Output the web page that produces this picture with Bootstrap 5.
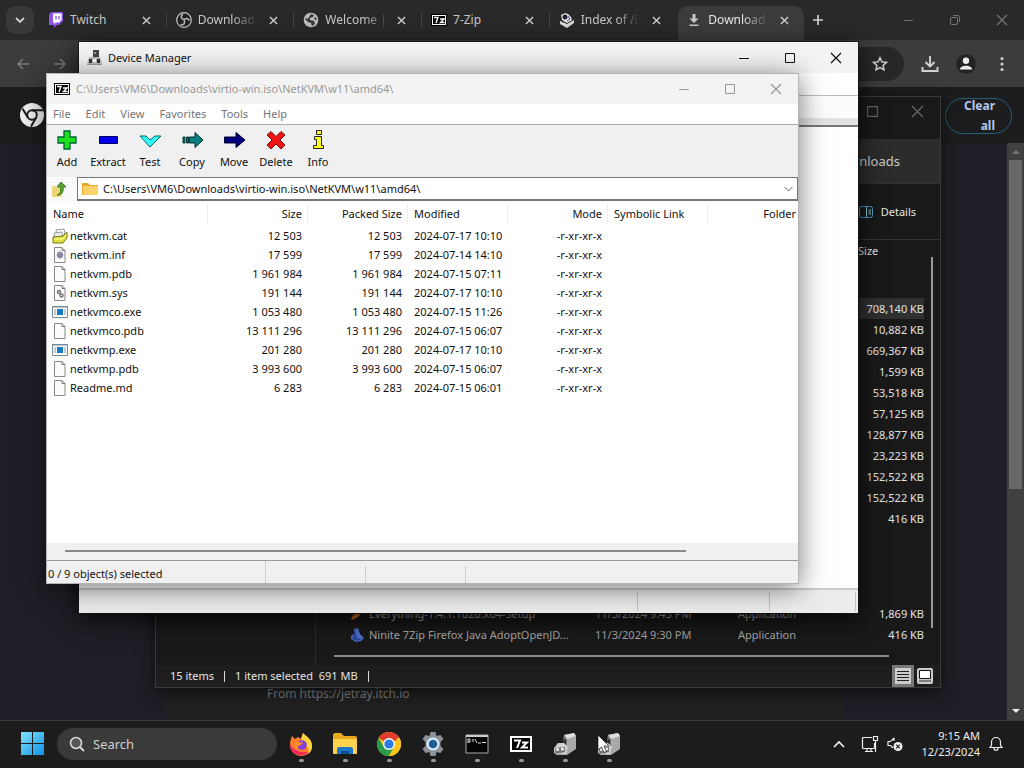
<!DOCTYPE html>
<html lang="en">
<head>
<meta charset="utf-8">
<meta name="viewport" content="width=device-width, initial-scale=1">
<title>Desktop</title>
<link rel="stylesheet" href="https://cdn.jsdelivr.net/npm/bootstrap@5.3.0/dist/css/bootstrap.min.css">
<style>
body{font-family:"Noto Sans","Open Sans",sans-serif;font-size:11px;line-height:20px;background:#1c1c1c;color:#ddd;overflow:hidden}
button{background:none;border:0;padding:0;color:inherit;font-size:inherit;line-height:inherit}
svg{display:block;flex:none}
.stroke{fill:none;stroke:currentColor}
.desk{min-height:0;overflow:hidden}
/* browser */
.strip{height:40px;background:#292929;color:#d0d0d0;padding:0 8px 0 6px}
.tabdrop{width:28px;height:28px;border-radius:9px;background:#383838}
.tabs{width:766px;height:40px;margin-left:4px;padding-top:6px}
.ctab{flex:1 1 0;min-width:0;height:34px;padding:0 15px 6px 10px;position:relative}
.ctab+.ctab:not(.on)::before{content:"";position:absolute;left:0;top:6px;height:16px;border-left:1px solid #444}
.ctab a{color:#c8c8c8;text-decoration:none;white-space:nowrap;font-size:12px;height:20px;margin-left:6px}
.ctab .fade-end{-webkit-mask-image:linear-gradient(90deg,#000 60%,transparent 105%);mask-image:linear-gradient(90deg,#000 60%,transparent 105%)}
.ctab.on{background:#3c3c3c;border-radius:10px 10px 0 0;margin-left:2px;padding-left:8px}
.ctab.on a{color:#e6e6e6}
.cap{gap:35px;color:#777}
.navrow{height:47px;background:#3c3c3c;color:#d2d2d2}
.omni{height:34px;border-radius:17px;background:#282828}
.navrow .more{margin-left:18px}
.web{background:linear-gradient(180deg,#1d1d1f 0 57px,#201f27 57px)}
.pagehead{height:56px}
.clearall{width:67px;height:36px;border:1px solid #245f78;border-radius:18px;color:#b4c8ee;font-weight:700;font-size:12px;text-align:right;padding:0 16px 0 12px;margin:11px 12px 0 0;white-space:normal}
.vbar{width:17px;background:#404040}
.vthumb{background:#686868;flex:0 0 57%}
.card-dl{background:#212121;color:#858585;font-size:12px;margin:0 164px 0 165px}
/* windows */
.win{position:absolute;display:flex;flex-direction:column;overflow:hidden}
.win-exp{left:155px;right:83px;top:96px;bottom:32px;background:#191919;border:1px solid #3a3a3a;box-shadow:0 4px 16px #000a;color:#e4e4e4}
.win-dev{left:79px;right:166px;top:42px;bottom:107px;background:#fff;box-shadow:0 6px 24px #000c,0 0 0 1px #222;color:#111}
.win-7z{left:46px;right:225px;top:73px;bottom:136px;background:#fff;border:1px solid #b4b4b4;box-shadow:0 4px 26px #0008;color:#111}
.exphead{height:42px;color:#666}
.exphead .caps{height:28px;gap:32px}
.exptabs{height:45px;background:#2c2c2c;font-size:13px;color:#c8c8c8;border-bottom:1px solid #333;padding-right:40px}
.expcmd{height:56px;border-bottom:1px solid #363636}
.tree{flex:0 0 160px;border-right:1px solid #2c2c2c}
.files{width:100%;table-layout:fixed;margin-left:34px}
.files td,.files th{padding:0;height:21px;font-weight:400;white-space:nowrap;line-height:21px}
.files td{color:#a8a8a8}
.files td:last-child{text-align:right;color:#e4e4e4}
.files tr.sel td{background:#303030;color:#e4e4e4}
.files .spacer td{height:37px}
.files .gap td{height:74px}
.vline{flex:0 0 2px;background:#999;margin:17px 7px 17px 7px}
.hline{height:2px;background:#8a8a8a;margin:0 51px 0 18px}
.expstat{height:22px;background:#1e1e1e;padding:0 4px 0 14px;gap:10px}
.stbar{border-left:1px solid #ddd;height:11px}
.viewbtn{width:22px;height:22px;color:#222}
.viewbtn.on{background:#777}
/* device manager */
.devhead{height:31px;background:#f3f3f3;gap:6px}
.caps34{gap:34px}
.devtool{height:32px;background:#fcfcfc;border-top:1px solid #bbb;border-bottom:2px solid #777;box-shadow:inset 0 -7px #e3e3e3}
.devblank{height:22px}
.devstat{height:25px;background:#ececec;border-top:2px solid #ccc;padding:2px 2px 2px 0}
.devstat span{border-right:1px solid #c4c4c4}
.devstat .w1{width:132px}
.devstat .w2{width:86px}
/* archive manager */
.zhead{height:30px;background:#f3f3f3;color:#999;gap:6px;padding-left:7px}
.zmenu{height:21px;border-bottom:1px solid #aaa;color:#757575;gap:15px;padding-left:6px}
.ztools{height:52px;background:#f0f0f0}
.ztools button{width:42px;gap:1px}
.ztools button:first-child{width:40px}
.addr{height:24px;border:1px solid #777;border-width:1px 1px 2px 1px}
.addr select{appearance:none;border:0;background:transparent;flex:1;min-width:0;color:#111;font:inherit;padding:0;line-height:20px;outline:0}
.upbtn{width:30px;background:#fafafa}
.zlist{width:100%;table-layout:fixed}
.zlist th,.zlist td{padding:0 6px;height:19px;line-height:19px;font-weight:400;white-space:nowrap}
.zlist th{height:25px;line-height:25px;background:linear-gradient(#eee,#eee) right 2px/1px 21px no-repeat}
.zlist th:last-child{background:none;padding-right:2px}
.zlist tbody td:first-child{padding-left:5px}
.zname{gap:2px}
.zscroll{height:17px;background:#f0f0f0;padding:7px 112px 0 18px}
.zscroll div{height:2px;background:#888}
.zstat{height:23px;background:#f0f0f0;border-top:1px solid #999}
.zstat span{width:100px;height:18px;border-right:1px solid #ccc;margin-top:5px}
.zstat .first{width:219px;margin:0;height:22px;padding:3px 0 0 1px}
/* taskbar */
.taskbar{height:48px;background:#1c1c1c;border-top:1px solid #3b3b3b;color:#eee;padding:0 20px 2px}
.find{width:220px;height:32px;border-radius:16px;background:#3a3a3a;margin:0 2px 0 12px}
.find input{border:0;background:transparent;color:#ddd;outline:0;font-size:13px;width:150px;padding:0}
.find input::placeholder{color:#d0d0d0;opacity:1}
.app{width:44px;height:45px;position:relative}
.app::after{content:"";position:absolute;bottom:4px;left:20px;width:5px;height:3px;border-radius:2px;background:#999}
.app svg:not(.pointer){width:26px;height:26px}
.pointer{position:absolute;left:10px;top:13px}
.clock{line-height:16px;font-size:11px;text-align:right;margin-left:18px}
</style>
</head>
<body class="vh-100 d-flex flex-column">
<svg width="0" height="0" class="position-absolute" aria-hidden="true">
 <symbol id="x" viewBox="0 0 10 10"><path d="M1 1l8 8M9 1L1 9" class="stroke" stroke-width="1.5"/></symbol>
 <symbol id="wx" viewBox="0 0 12 12"><path d="M1 1l10 10M11 1L1 11" class="stroke" stroke-width="1.2"/></symbol>
 <symbol id="wmax" viewBox="0 0 12 12"><path d="M1.5 1.5h9v9h-9z" class="stroke"/></symbol>
 <symbol id="wmin" viewBox="0 0 12 12"><path d="M1 6.5h10" class="stroke"/></symbol>
 <symbol id="z7" viewBox="0 0 16 12"><path d="M0 0h16v12H0z" fill="#000"/><path d="M1 1h14v10H1z" fill="#fff"/><path d="M2 2h12v8H2z" fill="#000"/><path d="M3 3.500h4L5 9M9 5h4L9.500 8.500H13.500" fill="none" stroke="#fff" stroke-width="1.400"/></symbol>
 <symbol id="doc" viewBox="0 0 16 16"><path d="M2.500.5h7.500l3 3v12H2.500z" fill="#fcfcfc" stroke="#888"/><path d="M10 .5v3h3" fill="none" stroke="#777"/></symbol>
 <symbol id="exe" viewBox="0 0 16 16"><path d="M.5 2.500h15v11H.5z" fill="#fff" stroke="#7a8a99"/><path d="M.5 3h15" stroke="#789"/><path d="M5 5h6v6H5z" fill="#1679c4"/><path d="M2 6h2M2 8h2M2 10h2M12 6h2M12 8h2M12 10h2" stroke="#89a"/></symbol>
 <symbol id="printer" viewBox="0 0 26 26"><path d="M12 4l10-2 2 3v13l-9 6H9l2-6z" fill="#a9a9a9"/><path d="M12 4l10-2 2 3-9 3z" fill="#dedede"/><path d="M12 4l3 4v9l-4-3z" fill="#777"/><path d="M12 8l2 1v5l-3-2z" fill="#2c2c2c"/><path d="M2 17l4-5h6l4 4-2 7-9 1-3-2z" fill="#d0d0d0"/><path d="M3 17l10-1v5l-9 2-1-1z" fill="#777"/><circle cx="5.500" cy="18.500" r="1.600" fill="#eee"/><circle cx="10.500" cy="18" r="1.600" fill="#eee"/></symbol>
</svg>

<main class="desk position-relative flex-grow-1 d-flex flex-column">
 <!-- Browser -->
 <div class="strip d-flex align-items-center">
  <button class="tabdrop d-flex align-items-center justify-content-center" aria-label="Search tabs"><svg width="10" height="10" viewBox="0 0 10 10"><path d="M1 3l4 4 4-4" class="stroke" stroke-width="1.8"/></svg></button>
  <nav class="tabs d-flex" aria-label="Tabs">
   <div class="ctab d-flex align-items-center"><svg width="16" height="16" viewBox="0 0 16 16"><path d="M3 0h12v9l-4 4H8.500L6 16v-3H1V3z" fill="#8c54e8"/><path d="M5 1.500h8.500V8l-2.500 2.500H8L6.500 12v-1.500H5z" fill="#fff"/><path d="M8 4v3.500M11 4v3.500" stroke="#8c54e8" stroke-width="1.300"/></svg><a href="#">Twitch</a><button class="ms-auto" aria-label="Close"><svg width="9" height="9"><use href="#x"/></svg></button></div>
   <div class="ctab d-flex align-items-center"><svg width="16" height="16" viewBox="0 0 16 16"><circle cx="8" cy="8" r="7.300" fill="#222" stroke="#c8c8c8" stroke-width="1.200"/><path d="M7 2C4 4 5 7 8 7.500M13.500 8.500c-2-3-5-2.500-5.500 0M4.500 12.500C8 13.500 9.500 11 8 8" fill="none" stroke="#b8b8b8" stroke-width="1.600"/></svg><a href="#" class="fade-end">Download</a><button class="ms-auto" aria-label="Close"><svg width="9" height="9"><use href="#x"/></svg></button></div>
   <div class="ctab d-flex align-items-center"><svg width="16" height="16" viewBox="0 0 16 16"><circle cx="8" cy="8" r="7.300" fill="#bdbdbd"/><path d="M8 2l3 1-1 2-3 1v2l4 1 1 3-3 2-1-3-3-1-3-3 1-1 2 1 1-2zM12 5l2 2-1 1-2-1z" fill="#393939"/></svg><a href="#" class="fade-end">Welcome |</a><button class="ms-auto" aria-label="Close"><svg width="9" height="9"><use href="#x"/></svg></button></div>
   <div class="ctab d-flex align-items-center"><svg width="16" height="12"><use href="#z7"/></svg><a href="#">7-Zip</a><button class="ms-auto" aria-label="Close"><svg width="9" height="9"><use href="#x"/></svg></button></div>
   <div class="ctab d-flex align-items-center"><svg width="16" height="16" viewBox="0 0 16 16"><path d="M1 9l7 3 7-4v3l-7 5-7-4z" fill="#d9d9d9"/><path d="M2 3l4-2 3 1 3 3 1 3-5 3-5-3z" fill="#e8e8ee"/><circle cx="6" cy="5" r="2.500" fill="#223"/><path d="M9 4l2 3-3 2" fill="none" stroke="#447" /></svg><a href="#" class="fade-end">Index of /i</a><button class="ms-auto" aria-label="Close"><svg width="9" height="9"><use href="#x"/></svg></button></div>
   <div class="ctab on d-flex align-items-center"><svg width="16" height="16" viewBox="0 0 16 16"><path d="M6.500 2h3v4.500h3L8 11 3.500 6.500h3zM3.500 12.500h9V14h-9z" fill="#c8c8c8"/></svg><a href="#" class="fade-end">Download</a><button class="ms-auto" aria-label="Close"><svg width="9" height="9"><use href="#x"/></svg></button></div>
  </nav>
  <button class="ms-2" aria-label="New tab"><svg width="12" height="12" viewBox="0 0 12 12"><path d="M6 1v10M1 6h10" class="stroke" stroke-width="1.7"/></svg></button>
  <div class="cap d-flex ms-auto me-2"><button aria-label="Minimize"><svg width="11" height="12"><use href="#wmin"/></svg></button><button aria-label="Restore"><svg width="12" height="12" viewBox="0 0 12 12"><rect x="1.500" y="3.500" width="7" height="7" rx="1.500" class="stroke"/><path d="M4 1.500h4.500q2 0 2 2V8" class="stroke"/></svg></button><button aria-label="Close"><svg width="12" height="12"><use href="#wx"/></svg></button></div>
 </div>
 <div class="navrow d-flex align-items-center px-3">
  <button aria-label="Back"><svg width="14" height="14" viewBox="0 0 14 14" color="#7d7d7d"><path d="M13 7H2M7 2L2 7l5 5" class="stroke" stroke-width="1.500"/></svg></button>
  <button aria-label="Forward" class="ms-4"><svg width="14" height="14" viewBox="0 0 14 14" color="#7d7d7d"><path d="M0 7h11M6 2l5 5-5 5" class="stroke" stroke-width="1.500"/></svg></button>
  <div class="omni d-flex align-items-center justify-content-end flex-grow-1 ms-5 pe-3"><button aria-label="Bookmark"><svg width="16" height="16" viewBox="0 0 16 16"><path d="M8 1.800l1.900 4.100 4.500.5-3.300 3 .9 4.400L8 11.600l-4 2.200.9-4.400-3.300-3 4.500-.5z" class="stroke" stroke-width="1.500"/></svg></button></div>
  <div class="d-flex align-items-center ms-3">
  <button aria-label="Downloads"><svg width="20" height="20" viewBox="0 0 20 20"><path d="M10 2v10M5.500 8l4.500 4.500L14.500 8M2.500 13v4h15v-4" class="stroke" stroke-width="1.900"/></svg></button>
  <button aria-label="Profile" class="ms-3"><svg width="20" height="20" viewBox="0 0 20 20"><circle cx="10" cy="10" r="9.800" fill="#232323"/><circle cx="10" cy="6.800" r="3.200" fill="#eee"/><path d="M4 15.500c0-5 12-5 12 0z" fill="#eee"/></svg></button>
  <button aria-label="Menu" class="more"><svg width="14" height="16" viewBox="0 0 14 16"><g fill="#ccc"><circle cx="8" cy="2.500" r="1.600"/><circle cx="8" cy="8" r="1.600"/><circle cx="8" cy="13.500" r="1.600"/></g></svg></button></div>
 </div>
 <div class="web flex-grow-1 d-flex flex-column">
  <div class="pagehead d-flex justify-content-between ps-3">
   <svg width="24" height="24" viewBox="0 0 24 24" class="mt-3 ms-1"><circle cx="12" cy="12" r="12" fill="#f2f2f2"/><circle cx="12" cy="12" r="4.800" fill="none" stroke="#1d1d1f" stroke-width="2"/><path d="M12 7.200h11M7.800 14.400L2.500 5.500M16.200 14.400L11 23.500" stroke="#1d1d1f" stroke-width="2"/></svg>
   <button class="clearall d-flex align-items-center justify-content-end">Clear all</button>
  </div>
  <div class="d-flex flex-grow-1">
   <div class="flex-grow-1 d-flex flex-column justify-content-end"><div class="card-dl pt-5 pb-3"><div style="padding-left:102px">From <a href="#" class="text-reset text-decoration-none">https://jetray.itch.io</a></div></div></div>
   <div class="vbar d-flex flex-column align-items-stretch"><svg class="mx-auto" width="8" height="17" viewBox="0 0 8 17"><path d="M0 11l4-4 4 4z" fill="#777"/></svg><div class="vthumb mx-auto w-75"></div><svg class="mt-auto mx-auto" width="8" height="17" viewBox="0 0 8 17"><path d="M0 6l4 4 4-4z" fill="#eee"/></svg></div>
  </div>
 </div>

 <!-- File explorer -->
 <section class="win win-exp" aria-label="Downloads folder">
  <div class="exphead d-flex justify-content-end pe-3"><div class="caps d-flex align-items-center"><button aria-label="Maximize"><svg width="13" height="13"><use href="#wmax"/></svg></button><button aria-label="Close"><svg width="13" height="13"><use href="#wx"/></svg></button></div></div>
  <div class="exptabs d-flex align-items-center justify-content-end">Downloads</div>
  <div class="expcmd d-flex align-items-center justify-content-end pe-4"><button class="d-flex align-items-center gap-2"><svg width="14" height="12" viewBox="0 0 14 12"><rect x=".5" y=".5" width="13" height="11" rx="2" fill="none" stroke="#4b9cc4"/><path d="M7.500 1v10M9.500 4h2.500M9.500 6h2.500M9.500 8h2.500" stroke="#8cc" fill="none"/></svg>Details</button></div>
  <div class="d-flex flex-grow-1">
   <div class="tree"></div>
   <div class="flex-grow-1 d-flex flex-column">
    <div class="d-flex">
     <table class="files">
      <colgroup><col style="width:19px"><col style="width:226px"><col style="width:143px"><col style="width:120px"><col></colgroup>
      <thead><tr><th></th><th></th><th></th><th></th><th>Size</th></tr></thead>
      <tbody>
       <tr class="spacer"><td colspan="5"></td></tr>
       <tr class="sel"><td colspan="5">708,140 KB</td></tr><tr><td colspan="5">10,882 KB</td></tr><tr><td colspan="5">669,367 KB</td></tr><tr><td colspan="5">1,599 KB</td></tr><tr><td colspan="5">53,518 KB</td></tr><tr><td colspan="5">57,125 KB</td></tr><tr><td colspan="5">128,877 KB</td></tr><tr><td colspan="5">23,223 KB</td></tr><tr><td colspan="5">152,522 KB</td></tr><tr><td colspan="5">152,522 KB</td></tr><tr><td colspan="5">416 KB</td></tr>
       <tr class="gap"><td colspan="5"></td></tr>
       <tr><td><svg width="14" height="14" viewBox="0 0 14 14"><path d="M1 12l3-5 5-5 4 3-5 5-6 3z" fill="#d4701d"/></svg></td><td>Everything-1.4.1.1026.x64-Setup</td><td>11/3/2024 9:45 PM</td><td>Application</td><td>1,869 KB</td></tr>
       <tr><td><svg width="14" height="14" viewBox="0 0 14 14"><path d="M4 1l4-1 2 6 4 4-3 3-5 1-5-3V8l3-2z" fill="#4e6fcc"/><path d="M5 2l2 8 5 1-5 2-5-2z" fill="#2c479c"/></svg></td><td>Ninite 7Zip Firefox Java AdoptOpenJD...</td><td>11/3/2024 9:30 PM</td><td>Application</td><td>416 KB</td></tr>
      </tbody>
     </table>
     <div class="vline"></div>
    </div>
    <div class="mt-auto pb-2"><div class="hline"></div></div>
   </div>
  </div>
  <div class="expstat d-flex align-items-center"><span>15 items</span><span class="stbar"></span><span>1 item selected&nbsp; 691 MB</span><span class="stbar"></span>
   <div class="ms-auto d-flex"><button class="viewbtn on d-flex align-items-center justify-content-center" aria-label="Details view"><svg width="16" height="16" viewBox="0 0 16 16"><rect width="16" height="16" fill="#ccc"/><path d="M2 3.500h12M2 6.500h12M2 9.500h12M2 12.500h12" stroke="#222"/></svg></button><button class="viewbtn d-flex align-items-center justify-content-center" aria-label="Large icons"><svg width="16" height="16" viewBox="0 0 16 16"><rect width="16" height="16" rx="2" fill="#ccc"/><path d="M2.500 2.500h11v8h-11z" fill="#fff" stroke="#111"/><path d="M2 13h12" stroke="#333"/></svg></button></div>
  </div>
 </section>

 <!-- Device manager -->
 <section class="win win-dev" aria-label="Device Manager">
  <div class="devhead d-flex align-items-center px-2"><svg width="15" height="16" viewBox="0 0 15 16"><path d="M6 0h6v7H6z" fill="#444"/><path d="M7 2h2v2H7z" fill="#999"/><path d="M2 7h11l2 7H0z" fill="#bbb"/><path d="M2 9h3v4H2zM10 9h3v4h-3z" fill="#333"/><path d="M6 9h3v3H6z" fill="#fff"/><path d="M0 14h15v1H0z" fill="#999"/></svg><span>Device Manager</span>
   <div class="caps34 ms-auto d-flex me-2"><button aria-label="Minimize"><svg width="12" height="12"><use href="#wmin"/></svg></button><button aria-label="Maximize"><svg width="12" height="12"><use href="#wmax"/></svg></button><button aria-label="Close"><svg width="12" height="12"><use href="#wx"/></svg></button></div></div>
  <div class="devblank"></div>
  <div class="devtool"></div>
  <div class="flex-grow-1"></div>
  <div class="devstat d-flex"><span class="flex-grow-1"></span><span class="w1"></span><span class="w2"></span></div>
 </section>

 <!-- Archive manager -->
 <section class="win win-7z" aria-label="7-Zip">
  <div class="zhead d-flex align-items-center"><svg width="16" height="12"><use href="#z7"/></svg><span>C:\Users\VM6\Downloads\virtio-win.iso\NetKVM\w11\amd64\</span>
   <div class="caps34 ms-auto d-flex me-3"><button aria-label="Minimize"><svg width="12" height="12"><use href="#wmin"/></svg></button><button aria-label="Maximize"><svg width="12" height="12"><use href="#wmax"/></svg></button><button aria-label="Close"><svg width="12" height="12"><use href="#wx"/></svg></button></div></div>
  <div class="zmenu d-flex align-items-center"><button>File</button><button>Edit</button><button>View</button><button>Favorites</button><button>Tools</button><button>Help</button></div>
  <div class="ztools d-flex">
   <button class="d-flex flex-column align-items-center pt-1"><svg width="24" height="22" viewBox="0 0 24 22"><path d="M9 2h6v6h6v6h-6v6H9v-6H3V8h6z" fill="#1fe01f" stroke="#063" stroke-width="1.300"/></svg>Add</button>
   <button class="d-flex flex-column align-items-center pt-1"><svg width="24" height="22" viewBox="0 0 24 22"><path d="M3.500 7.500h18v7h-18z" fill="#0000e8" stroke="#006"/></svg>Extract</button>
   <button class="d-flex flex-column align-items-center pt-1"><svg width="24" height="22" viewBox="0 0 24 22"><path d="M2 7h6l4 4 5-4h6L12 18z" fill="#3ff" stroke="#066"/></svg>Test</button>
   <button class="d-flex flex-column align-items-center pt-1"><svg width="24" height="22" viewBox="0 0 24 22"><path d="M3 8h2v6H3zM6.500 8h2v6h-2zM9.500 8H15V3.500l8 7.500-8 7.500V14H9.500z" fill="#0a8080" stroke="#033"/></svg>Copy</button>
   <button class="d-flex flex-column align-items-center pt-1"><svg width="24" height="22" viewBox="0 0 24 22"><path d="M2.500 8H14V3.500l9 7.500-9 7.500V14H2.500z" fill="#000080" stroke="#003"/></svg>Move</button>
   <button class="d-flex flex-column align-items-center pt-1"><svg width="24" height="22" viewBox="0 0 24 22"><path d="M7 2.500l5 5 5-5 4 3.500-5 5 5 5-4 4-5-5-5 5-4-4 5-5-5-5z" fill="#f01515" stroke="#711"/></svg>Delete</button>
   <button class="d-flex flex-column align-items-center pt-1"><svg width="24" height="22" viewBox="0 0 24 22"><path d="M10.500 1.500h5v4h-5zM8.500 7.500h7v9h2v3h-10v-3h3v-6h-2z" fill="#ffff20" stroke="#222"/></svg>Info</button>
  </div>
  <div class="d-flex"><button class="upbtn d-flex align-items-center ps-1" aria-label="Up one level"><svg width="16" height="18" viewBox="0 0 16 18"><path d="M1 6h4l1 2h5v9H1z" fill="#eed679"/><path d="M6 15c4-1 4-5 3-8H6l4-5 5 5h-3c1 5-1 8-6 8z" fill="#59a52c" stroke="#276b15" stroke-width=".8"/></svg></button>
   <div class="addr d-flex align-items-center flex-grow-1 px-1"><svg width="17" height="16" viewBox="0 0 17 16"><path d="M0 2h6l2 2h8v10H0z" fill="#e5a92c"/><path d="M1 5h15v9H1z" fill="#fbd36a"/></svg><select class="ms-1" aria-label="Path"><option>C:\Users\VM6\Downloads\virtio-win.iso\NetKVM\w11\amd64\</option></select><svg width="9" height="8" viewBox="0 0 9 8"><path d="M.5 2l4 4 4-4" fill="none" stroke="#666"/></svg></div></div>
  <div class="flex-grow-1">
   <table class="zlist">
    <colgroup><col style="width:161px"><col style="width:100px"><col style="width:100px"><col style="width:100px"><col style="width:100px"><col style="width:100px"><col></colgroup>
    <thead><tr><th>Name</th><th class="text-end">Size</th><th class="text-end">Packed Size</th><th>Modified</th><th class="text-end">Mode</th><th>Symbolic Link</th><th class="text-end">Folder</th></tr></thead>
    <tbody id="rows"></tbody>
   </table>
  </div>
  <div class="zscroll"><div></div></div>
  <div class="zstat d-flex"><span class="first">0 / 9 object(s) selected</span><span></span><span></span></div>
 </section>
</main>

<footer class="taskbar d-flex align-items-center">
 <button aria-label="Start"><svg width="25" height="25" viewBox="0 0 25 25"><defs><linearGradient id="wg" x2="1" y2="1"><stop stop-color="#7fe3fb"/><stop offset="1" stop-color="#1191e8"/></linearGradient></defs><path d="M1 1h11v11H1zM13 1h11v11H13zM1 13h11v11H1zM13 13h11v11H13z" fill="url(#wg)"/></svg></button>
 <label class="find d-flex align-items-center gap-2 ps-2"><svg class="ms-1" width="16" height="16" viewBox="0 0 16 16"><circle cx="7" cy="7" r="5.500" fill="#555" stroke="#ddd" stroke-width="1.500"/><path d="M11 11l4 4" stroke="#ddd" stroke-width="1.800"/></svg><input placeholder="Search" aria-label="Search"></label>
 <div class="d-flex">
  <button class="app d-flex align-items-center justify-content-center" aria-label="Firefox"><svg viewBox="0 0 26 26"><path d="M4 5l3 3 3-2 3 2 2-6c2 3 9 5 9 13 0 6-5 10-11 10S2 20 2 14c0-4 1-6 2-9z" fill="#ff7a2b"/><path d="M15 2c2 3 9 5 9 13 0 3-1 6-4 8 2-7-3-9-7-15z" fill="#ffd43b"/><path d="M2 13c0 12 12 14 19 8-6 1-15 0-19-8z" fill="#f0295d"/><circle cx="14" cy="14" r="4.800" fill="#8040d8"/><path d="M6 11c4-2 6 2 9 0 0 3-5 3-7 7-2-2-2-5-2-7z" fill="#ff8b2b"/></svg></button>
  <button class="app d-flex align-items-center justify-content-center" aria-label="File Explorer"><svg viewBox="0 0 26 26"><path d="M1 4q0-2 2-2h6l3 3h11q2 0 2 2v16H1z" fill="#e8a820"/><path d="M1 8h24v13q0 2-2 2H3q-2 0-2-2z" fill="#ffd24d"/><path d="M5 23v-5q0-2 2-2h12q2 0 2 2v5z" fill="#1b78c8"/><path d="M9 23v-3h8v3z" fill="#0d4f8e"/></svg></button>
  <button class="app d-flex align-items-center justify-content-center" aria-label="Chrome"><svg viewBox="0 0 26 26"><circle cx="13" cy="13" r="12" fill="#fbc51b"/><path d="M13 13L2.600 7a12 12 0 0 1 20.800 0z" fill="#e33b2e"/><path d="M2.600 7L13 25A12 12 0 0 1 2.600 7z" fill="#269b4c"/><path d="M13 25l5.200-9L13 13 7.800 16z" fill="#269b4c"/><path d="M13 25l6-10.500 2-7.500h2.400A12 12 0 0 1 13 25z" fill="#fbc51b"/><circle cx="13" cy="13" r="6" fill="#fff"/><circle cx="13" cy="13" r="4.600" fill="#2c7be5"/></svg></button>
  <button class="app d-flex align-items-center justify-content-center" aria-label="Settings"><svg viewBox="0 0 26 26"><path d="M10.500 1h5l1 4 4-1 3 4-3 3v4l3 3-3 4-4-1-1 4h-5l-1-4-4 1-3-4 3-3v-4l-3-3 3-4 4 1z" fill="#8b9299"/><circle cx="13" cy="13" r="6.500" fill="#d9eefa"/><circle cx="13" cy="13" r="4.300" fill="#205f92"/></svg></button>
  <button class="app d-flex align-items-center justify-content-center" aria-label="Terminal"><svg viewBox="0 0 26 26"><path d="M2 4h22v18H2z" fill="#050505" stroke="#aaa"/><path d="M2 5h22" stroke="#ccc" stroke-width="2"/><path d="M4 8v4M4 8h2v3H4M9 8v3M11 8l2 4M14 12h3M18 11.500h4" fill="none" stroke="#ddd"/></svg></button>
  <button class="app d-flex align-items-center justify-content-center" aria-label="7-Zip"><svg viewBox="0 0 26 26"><path d="M2 5h22v16H2z" fill="#fff"/><path d="M4 7h18v12H4z" fill="#000"/><path d="M6 9.500h6L9 17M14 11.500h5l-5 5h6" fill="none" stroke="#fff" stroke-width="2"/></svg></button>
  <button class="app d-flex align-items-center justify-content-center" aria-label="Device Manager"><svg><use href="#printer"/></svg></button>
  <button class="app d-flex align-items-center justify-content-center" aria-label="Device Manager"><svg><use href="#printer"/></svg><svg class="pointer" width="13" height="19" viewBox="0 0 13 19"><path d="M1 1v15l3.500-3 2.500 5.500 2.500-1L7 12h5z" fill="#fff" stroke="#111" stroke-width=".7"/></svg></button>
 </div>
 <div class="d-flex align-items-center ms-auto">
  <button aria-label="Hidden icons" class="me-3"><svg width="12" height="10" viewBox="0 0 12 10"><path d="M1 8l5-5 5 5" class="stroke" stroke-width="1.700"/></svg></button>
  <button aria-label="Network"><svg width="18" height="18" viewBox="0 0 18 18"><path d="M11 2.500H2.500q-1 0-1 1v9q0 1 1 1h10q1 0 1-1V8M6 13.500v3M10 13.500v3M4 16.500h8" class="stroke" stroke-width="1.200"/><path d="M12.500 1.500h4v4h-4zM14.500 6v11" class="stroke" stroke-width="1.200"/></svg></button>
  <button aria-label="Sound off" class="ms-2"><svg width="16" height="16" viewBox="0 0 16 16"><path d="M7 2v3M7 2L3.500 5.500H1v4h2.500L6 12" class="stroke" stroke-width="1.200"/><circle cx="11" cy="10.500" r="4.500" fill="#eee"/><path d="M9.200 8.700l3.600 3.600M12.800 8.700l-3.600 3.600" stroke="#1c1c1c" stroke-width="1.200"/></svg></button>
  <div class="clock"><div>9:15 AM</div><div>12/23/2024</div></div>
  <button aria-label="Notifications" class="ms-2"><svg width="16" height="17" viewBox="0 0 16 17"><path d="M2 12.500l1.500-2.500V7a4.500 4.500 0 0 1 9 0v3l1.500 2.500zM6 13c0 3 4 3 4 0" class="stroke" stroke-width="1.200"/></svg></button>
 </div>
</footer>
<script src="https://cdn.jsdelivr.net/npm/bootstrap@5.3.0/dist/js/bootstrap.bundle.min.js"></script>
<script>
const doc='<use href="#doc"/>', exe='<use href="#exe"/>';
const cog=doc+'<g fill="none" stroke="#779"><circle cx="8" cy="8" r="2.200" stroke-width="1.500"/><path d="M8 4v8M4.500 8h7M5.500 5.500l5 5M10.500 5.500l-5 5" stroke-width=".7"/></g>';
const gears=doc+'<g fill="none" stroke="#777" stroke-width="1.500"><circle cx="7" cy="7" r="1.500"/><circle cx="9.500" cy="10.500" r="1.500"/></g>';
const cat='<path d="M4 2l8-1 1 6-8 2z" fill="#fff" stroke="#999"/><path d="M2 5l8-1 1 5-8 1z" fill="#eee" stroke="#999"/><path d="M1 9l10-1 4-4v6l-4 5H1z" fill="#dede3c" stroke="#777720"/><path d="M2 11h9l3-4" fill="none" stroke="#ffffa0"/>';
const files=[
 [cat,'netkvm.cat','12 503','2024-07-17 10:10'],[cog,'netkvm.inf','17 599','2024-07-14 14:10'],
 [doc,'netkvm.pdb','1 961 984','2024-07-15 07:11'],[gears,'netkvm.sys','191 144','2024-07-17 10:10'],
 [exe,'netkvmco.exe','1 053 480','2024-07-15 11:26'],[doc,'netkvmco.pdb','13 111 296','2024-07-15 06:07'],
 [exe,'netkvmp.exe','201 280','2024-07-17 10:10'],[doc,'netkvmp.pdb','3 993 600','2024-07-15 06:07'],
 [doc,'Readme.md','6 283','2024-07-15 06:01']];
document.getElementById('rows').innerHTML=files.map(([i,n,s,d])=>`<tr><td><div class="zname d-flex align-items-center"><svg width="16" height="16" viewBox="0 0 16 16">${i}</svg><span>${n}</span></div></td><td class="text-end">${s}</td><td class="text-end">${s}</td><td>${d}</td><td class="text-end">-r-xr-xr-x</td><td></td><td></td></tr>`).join('');
</script>
</body>
</html>
